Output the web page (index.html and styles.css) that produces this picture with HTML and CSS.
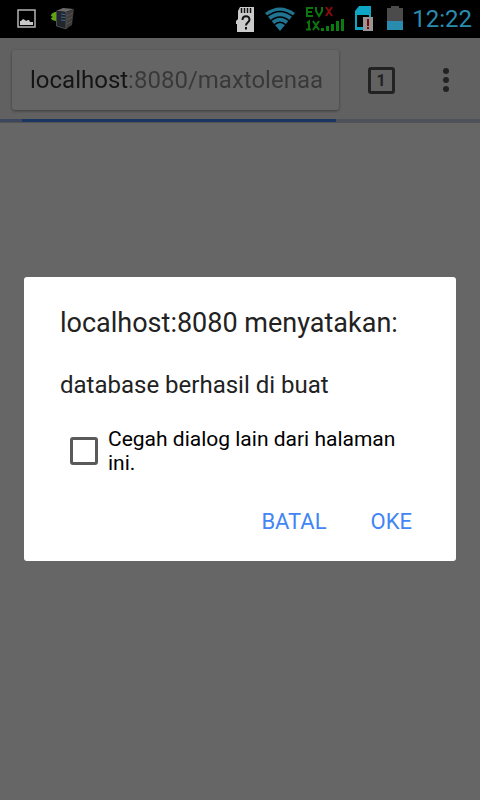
FILE: index.html
```html
<!DOCTYPE html>
<html lang="id">
<head>
<meta charset="utf-8">
<meta name="viewport" content="width=device-width, initial-scale=1">
<title>localhost:8080</title>
<link rel="stylesheet" href="styles.css">
</head>
<body>
<header class="status">
  <div class="status-group notices">
    <svg width="20" height="20" viewBox="0 0 20 20" aria-hidden="true">
      <rect x="1" y="1" width="17" height="17" fill="#000" stroke="#b4b4b4" stroke-width="1.500"/>
      <path d="M3 16v-4h1l2-2 2 1 1 1 2-1h1l1 2h3v3z" fill="#c8c8c8"/>
    </svg>
    <svg width="24" height="22" viewBox="0 0 24 22" aria-hidden="true">
      <path d="M6 4C2 4 0 6 0 8l2 1-2 1c0 2 3 3 6 3z" fill="#5fa512"/>
      <path d="M5 3l7-3 11 1-8 3z" fill="#6a6a6a"/>
      <path d="M5 3l10 1v17L5 18z" fill="#22252a"/>
      <path d="M15 4l8-3-2 16-6 4z" fill="#3d3b3b"/>
      <path d="M16 8l6-3M16 12l5-3M16 16l5-3" stroke="#5a5858" stroke-width=".8"/>
      <path d="M10 6l4 .5M10 9l4 .5M10 12l4 .5" stroke="#376b99" stroke-width="1.200"/>
      <path d="M5.500 3.500V18L15 21V4" fill="none" stroke="#5c5f63" stroke-width=".7"/>
    </svg>
  </div>
  <div class="status-group system">
    <svg width="20" height="26" viewBox="0 0 20 26" aria-hidden="true">
      <path d="M5 1h14v25H2v-8H1v-3l2-2V5z" fill="#cbcbcb"/>
      <path d="M6.500 2v5M9.500 2v5M12.500 2v5M15.500 2v5" stroke="#111" stroke-width="1.500"/>
      <path d="M7.500 14c0-5 7-5 7-.5 0 3-3.500 3-3.500 6M11 21v2.500" fill="none" stroke="#111" stroke-width="2"/>
    </svg>
    <svg width="32" height="24" viewBox="0 0 32 24" aria-hidden="true">
      <path d="M1 6Q16-5 31 6L16 24z" fill="#207491"/>
      <path d="M3 9.500Q16-.5 29 9.500M6.500 14Q16 6 25.500 14M10 18Q16 12.500 22 18" fill="none" stroke="#000" stroke-width="1.600"/>
    </svg>
    <svg width="40" height="26" viewBox="0 0 40 26" aria-hidden="true">
      <g fill="none" stroke="#0b7610" stroke-width="2">
        <path d="M8 2H2v8h6M2 6h5M11 1v4l3 5 3-5V1M2 17l2-1.500V24M1 23.500h5M8 15l6 9M14 15l-6 9"/>
      </g>
      <path d="M21 1l6 9M27 1l-6 9" stroke="#850d0d" stroke-width="2"/>
      <path d="M16 22h3v3h-3zM21 20h3v5h-3zM26 18h3v7h-3zM31 15h3v10h-3zM36 13h3v12h-3z" fill="#0b7d10"/>
    </svg>
    <svg width="20" height="26" viewBox="0 0 20 26" aria-hidden="true">
      <path d="M5 0h12v24H1V5z" fill="#0da6c5"/>
      <path d="M3 9h12v12H3z" fill="#000"/>
      <path d="M9 11h10v14H9z" fill="#969696"/>
      <path d="M13 13h2v7h-2zM13 21h2v2h-2z" fill="#850000"/>
    </svg>
    <svg class="battery" width="16" height="24" viewBox="0 0 16 24" aria-hidden="true">
      <path d="M4 0h8v2h4v13H0V2h4z" fill="#4b4b4b"/>
      <path d="M0 15h16v9H0z" fill="#298caf"/>
    </svg>
    <time>12:22</time>
  </div>
</header>
<div class="screen">
  <div class="toolbar">
    <div class="address">
      <input class="url" type="text" aria-label="Alamat" value="localhost:8080/maxtolenaa">
    </div>
    <button class="tabs" type="button" aria-label="Tab terbuka"><span>1</span></button>
    <button class="more" type="button" aria-label="Menu">
      <svg width="6" height="24" viewBox="0 0 6 24" aria-hidden="true">
        <circle cx="3" cy="3" r="3"/><circle cx="3" cy="12" r="3"/><circle cx="3" cy="21" r="3"/>
      </svg>
    </button>
  </div>
  <div class="progress"><span class="tail"></span><span class="bar"></span></div>
  <div class="scrim">
    <form class="dialog" role="dialog" aria-labelledby="dialog-title">
      <h1 id="dialog-title">localhost:8080 menyatakan:</h1>
      <p>database berhasil di buat</p>
      <label class="suppress">
        <input type="checkbox">
        <span>Cegah dialog lain dari halaman ini.</span>
      </label>
      <div class="actions">
        <button type="button">BATAL</button>
        <button type="button">OKE</button>
      </div>
    </form>
  </div>
</div>
</body>
</html>
```
FILE: styles.css
```css
* { box-sizing: border-box; }

body {
  margin: 0;
  min-height: 100vh;
  display: flex;
  flex-direction: column;
  background: #fff;
  font-family: Roboto, sans-serif;
}

button, input { font: inherit; }

button {
  padding: 0;
  border: 0;
  background: none;
}

svg { display: block; flex: none; }

.status {
  display: flex;
  align-items: center;
  justify-content: space-between;
  height: 38px;
  padding: 0 8px 0 17px;
  background: #000;
}

.status-group { display: flex; align-items: center; }
.notices { gap: 14px; }
.system { gap: 9px; }
.battery { margin: 0 0 2px 4px; }

time {
  color: #298caf;
  font-size: 24px;
  line-height: 38px;
}

.screen {
  position: relative;
  flex: 1;
  display: flex;
  flex-direction: column;
}

.toolbar {
  display: flex;
  align-items: center;
  padding: 12px 16px 9px 12px;
  background: #f2f2f2;
}

.address {
  flex: 1;
  min-width: 0;
  padding: 0 12px 0 18px;
  border-radius: 3px;
  background: #fcfcfc;
  box-shadow: 0 1px 3px rgba(0, 0, 0, 0.4);
}

.url {
  display: block;
  width: 100%;
  height: 60px;
  padding: 0;
  border: 0;
  outline: 0;
  font-size: 24px;
  color: transparent;
  background: linear-gradient(90deg, #333 98px, #8c8c8c 98px);
  background-clip: text;
  -webkit-background-clip: text;
}

.tabs {
  display: grid;
  place-items: center;
  width: 84px;
  height: 60px;
}

.tabs span {
  width: 27px;
  border: 3px solid #555;
  border-radius: 3px;
  color: #555;
  font-size: 16px;
  font-weight: 700;
  line-height: 21px;
}

.more {
  display: grid;
  place-items: center;
  width: 36px;
  height: 60px;
  margin-left: 5px;
}

.more svg { fill: #555; }

.progress {
  display: flex;
  height: 4px;
  border-bottom: 1px solid #ccc;
  background: #c3cde8;
}

.tail { width: 22px; background: #96b2e8; }
.bar { width: 314px; background: #4285f4; }

.scrim {
  position: absolute;
  inset: 0;
  display: grid;
  place-items: center;
  padding: 24px;
  background: rgba(0, 0, 0, 0.6);
}

.dialog {
  width: 100%;
  max-width: 560px;
  padding: 30px 36px 16px;
  border-radius: 3px;
  background: #fff;
  color: #222;
}

h1 {
  margin: 0 0 30px;
  font-size: 27px;
  font-weight: 400;
  line-height: 32px;
}

p {
  margin: 0 0 26px;
  font-size: 24px;
  line-height: 32px;
}

.suppress {
  display: flex;
  align-items: center;
  gap: 10px;
  padding-left: 10px;
  color: #000;
  font-size: 21px;
  line-height: 24px;
}

.suppress input {
  appearance: none;
  flex: none;
  width: 28px;
  height: 28px;
  margin: 0;
  border: 3px solid #5a5a5a;
  border-radius: 3px;
}

.actions {
  display: flex;
  justify-content: flex-end;
  gap: 44px;
  margin-top: 22px;
  padding-right: 8px;
}

.actions button {
  height: 48px;
  color: #4285f4;
  font-size: 22px;
}
```
